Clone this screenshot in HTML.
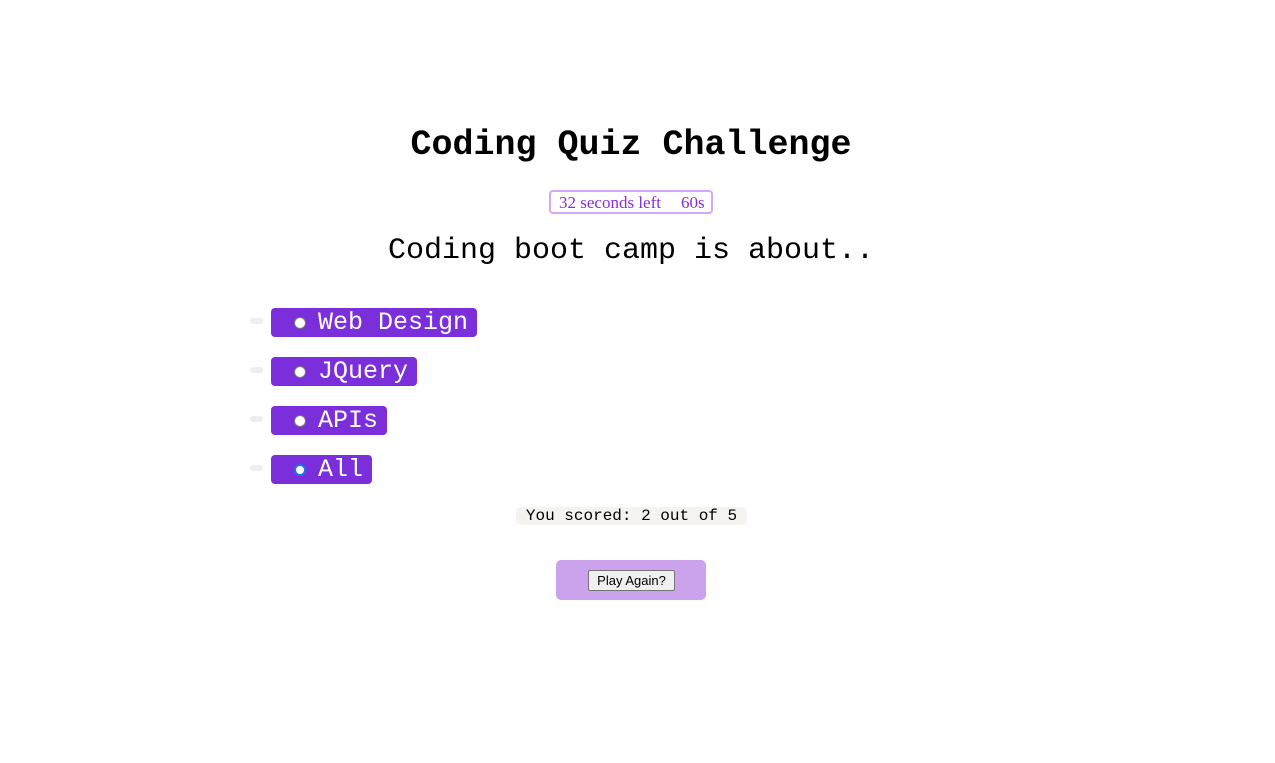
<!DOCTYPE html>
<html><head><style>
body{margin:0;background:#fff;width:1275px;height:763px;position:relative;font-family:"Liberation Mono",monospace;}
.a{position:absolute;white-space:nowrap}
h1{position:absolute;left:0;width:1262px;text-align:center;top:124px;margin:0;font-size:35px;font-weight:bold;font-family:"Liberation Mono",monospace;line-height:42px}
.timer{left:549px;top:190px;width:160px;height:20px;border:2px solid #d4a8f7;border-radius:4px;font-family:"Liberation Serif",serif;color:#8a2be2;font-size:17px;line-height:21px}
.q{left:0;width:1262px;text-align:center;top:233px;font-size:30px;line-height:36px}
.opt{left:271px;height:29px;background:#7b2fdb;border-radius:4px;color:#fff;font-size:25px;line-height:29px;padding-left:47px;box-sizing:border-box}
.rad{position:absolute;left:23px;top:9px;width:12px;height:12px;border-radius:50%;background:#fff;border:1px solid #777;box-sizing:border-box}
.dot{left:250px;width:13px;height:6px;background:#eee;border-radius:3px}
.score{left:516px;top:507px;width:231px;height:18px;background:#f4f3ef;border-radius:5px;font-size:16px;line-height:18px;text-align:center}
.pa{left:556px;top:560px;width:150px;height:40px;background:#cba3ec;border-radius:5px}
.btn{left:588px;top:570px;width:87px;height:21px;background:#efefef;border:1px solid #767676;border-radius:2px;box-sizing:border-box;font-family:"Liberation Sans",sans-serif;font-size:13px;line-height:19px;text-align:center}
</style></head><body>
<h1>Coding Quiz Challenge</h1>
<div class="a timer"><span style="margin-left:8px">32 seconds left</span><span style="margin-left:20px">60s</span></div>
<div class="a q">Coding boot camp is about..</div>
<div class="a dot" style="top:318px"></div>
<div class="a opt" style="top:308px;width:206px"><span class="rad"></span>Web Design</div>
<div class="a dot" style="top:367px"></div>
<div class="a opt" style="top:357px;width:146px"><span class="rad"></span>JQuery</div>
<div class="a dot" style="top:416px"></div>
<div class="a opt" style="top:406px;width:116px"><span class="rad"></span>APIs</div>
<div class="a dot" style="top:465px"></div>
<div class="a opt" style="top:455px;width:101px"><span class="rad" style="border:2px solid #1a73e8"></span>All</div>
<div class="a score">You scored: 2 out of 5</div>
<div class="a pa"></div>
<div class="a btn">Play Again?</div>
</body></html>
